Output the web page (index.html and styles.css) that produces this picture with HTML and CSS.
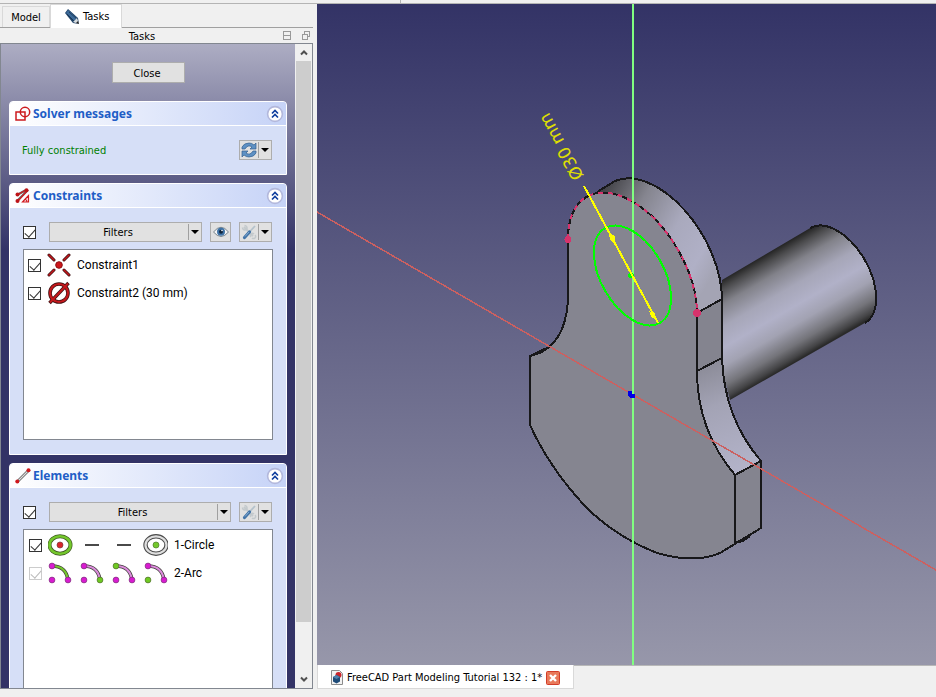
FILE: index.html
```html
<!DOCTYPE html>
<html lang="en">
<head>
<meta charset="utf-8">
<title>FreeCAD</title>
<link rel="stylesheet" href="styles.css">
</head>
<body>
<svg class="defs" width="0" height="0" aria-hidden="true">
  <defs>
    <linearGradient id="arcside" gradientUnits="userSpaceOnUse" x1="600" y1="188" x2="722" y2="260">
      <stop offset="0" stop-color="#3c3c40"/><stop offset=".3" stop-color="#85858f"/><stop offset=".6" stop-color="#a9a9bd"/><stop offset=".85" stop-color="#b0b0c6"/><stop offset="1" stop-color="#a4a4b4"/>
    </linearGradient>
    <linearGradient id="fillet" gradientUnits="userSpaceOnUse" x1="705" y1="362" x2="745" y2="465">
      <stop offset="0" stop-color="#8a8a96"/><stop offset=".4" stop-color="#a3a3b5"/><stop offset="1" stop-color="#b2b2c8"/>
    </linearGradient>
    <linearGradient id="cyl" gradientUnits="userSpaceOnUse" x1="765" y1="255" x2="819" y2="348">
      <stop offset="0" stop-color="#262626"/><stop offset=".07" stop-color="#4a4a4c"/><stop offset=".2" stop-color="#82828a"/><stop offset=".38" stop-color="#a6a6b8"/><stop offset=".55" stop-color="#b1b1c8"/><stop offset=".7" stop-color="#a2a2b2"/><stop offset=".86" stop-color="#74747a"/><stop offset=".96" stop-color="#444446"/><stop offset="1" stop-color="#2a2a2a"/>
    </linearGradient>
    <symbol id="chevrons" viewBox="0 0 18 18">
      <circle cx="9" cy="9" r="7.4" fill="#fff" stroke="#b3b8dc" stroke-width="1.6"/>
      <path d="M6 8.5 9 5.5l3 3M6 12.5l3-3 3 3" fill="none" stroke="#0f3f9f" stroke-width="1.7"/>
    </symbol>
    <symbol id="tools" viewBox="0 0 16 16">
      <path d="m3 3 9 9" stroke="#c3c9cc" stroke-width="2"/>
      <path d="M1.5 3.5a2.5 2.5 0 0 0 4 2M3.5 1.5a2.5 2.5 0 0 1 2 4M10 13a2 2 0 0 1 3-3M11 14a2 2 0 0 0 3-3" fill="none" stroke="#c3c9cc" stroke-width="1.5"/>
      <path d="M14 2 8 8.5" stroke="#b4c2cb" stroke-width="1.8"/>
      <path d="m8.5 8-5 5.5" stroke="#4274a8" stroke-width="3.2" stroke-linecap="round"/>
      <path d="m8 8-4 4.5" stroke="#83abd0"/>
    </symbol>
  </defs>
</svg>

<div class="toolbar-edge"></div>
<div class="workspace">
  <aside class="dock">
    <div class="dock-tabs" role="tablist">
      <button class="dock-tab" role="tab">Model</button>
      <button class="dock-tab active" role="tab" aria-selected="true">
        <svg width="16" height="16" viewBox="0 0 16 16"><path d="M1 4 4 0l10 9 1 6-6-1z" fill="#1f4268"/><path d="m2 4 2-3 9 8-3 3z" fill="#3b6998"/><path d="m3 5 8 8M5 3l8 7" stroke="#173451" stroke-width=".8"/><path d="m9 13 4-4 2 6z" fill="#d8dde0"/><path d="m12 14 2-2 1 3z" fill="#222"/></svg>
        Tasks
      </button>
    </div>
    <header class="dock-title">
      <span class="dock-name">Tasks</span>
      <svg width="8" height="9" viewBox="0 0 8 9" class="crisp"><path d="M.5.5h7v8h-7zM0 4.5h8" fill="none" stroke="#999"/></svg>
      <svg width="8" height="9" viewBox="0 0 8 9" class="crisp"><path d="M.5 3.500h5v5h-5zM2.500 3V.5h5v5H6" fill="none" stroke="#999"/></svg>
    </header>
    <div class="task-area">
      <main class="tasks">
        <button class="close">Close</button>

        <section class="box">
          <h2 class="box-head">
            <svg width="16" height="16" viewBox="0 0 16 16" fill="none" stroke="#cc1a1e" stroke-width="1.500"><path d="M1 6h9v8H1z"/><circle cx="10" cy="6" r="4.700"/></svg>
            <span>Solver messages</span>
            <button class="fold" aria-label="Collapse"><svg width="18" height="18"><use href="#chevrons"/></svg></button>
          </h2>
          <div class="box-body solver">
            <span class="status">Fully constrained</span>
            <button class="tool split" aria-label="Update">
              <svg width="16" height="16" viewBox="0 0 16 16"><path d="M1 7V5q2-4 7-4 3 0 5 2l2-2v6H9l2-2Q7 2 4 7z" fill="#5e91c4" stroke="#34608f" stroke-width=".7"/><path d="M15 9v2q-2 4-7 4-3 0-5-2l-2 2V9h6l-2 2q4 3 7-2z" fill="#5e91c4" stroke="#34608f" stroke-width=".7"/></svg>
              <i class="caret"></i>
            </button>
          </div>
        </section>

        <section class="box">
          <h2 class="box-head">
            <svg width="16" height="16" viewBox="0 0 16 16"><path d="m2 7 9-5M2 13 13 2" stroke="#666" stroke-width="2.200"/><path d="m2 7 9-5M3 13l9-10" stroke="#d21b20" stroke-width="1.200"/><path d="m7.500 14 6-6.500V14zM10 11q2 1 2 3" stroke="#d21b20" stroke-width="1.200" fill="#f4e4e8"/><g fill="#bd1418"><circle cx="2.500" cy="6.500" r="2"/><circle cx="11.500" cy="2.300" r="2"/><circle cx="2.500" cy="13" r="2"/></g></svg>
            <span>Constraints</span>
            <button class="fold" aria-label="Collapse"><svg width="18" height="18"><use href="#chevrons"/></svg></button>
          </h2>
          <div class="box-body">
            <div class="filter-row">
              <input type="checkbox" checked aria-label="Filter constraints">
              <button class="tool split filters"><span>Filters</span><i class="caret"></i></button>
              <button class="tool eye" aria-label="Show or hide">
                <svg width="16" height="12" viewBox="0 0 16 12"><path d="M.5 6Q8-3.500 15.500 6 8 15 .5 6z" fill="#f4f4f4" stroke="#77828a"/><circle cx="8" cy="5.800" r="4" fill="#3e72a6"/><circle cx="8" cy="5.800" r="2" fill="#10253c"/><circle cx="9" cy="4.500" r=".8" fill="#fff"/></svg>
              </button>
              <button class="tool split" aria-label="Settings"><svg width="16" height="16"><use href="#tools"/></svg><i class="caret"></i></button>
            </div>
            <ul class="list">
              <li><label class="item">
                <input type="checkbox" checked>
                <svg width="24" height="24" viewBox="0 0 24 24"><g stroke-linecap="round"><path d="m2 2 5 5M22 2l-5 5M2 22l5-5M22 22l-5-5" stroke="#3c1012" stroke-width="3"/><path d="m2 2 5 5M22 2l-5 5M2 22l5-5M22 22l-5-5" stroke="#c4181c" stroke-width="1.500"/></g><circle cx="12" cy="12" r="3.300" fill="#cf171c" stroke="#8a1013"/></svg>
                <span>Constraint1</span>
              </label></li>
              <li><label class="item">
                <input type="checkbox" checked>
                <svg width="24" height="24" viewBox="0 0 24 24" fill="none"><circle cx="12" cy="12" r="9" stroke="#3c1012" stroke-width="3.600"/><path d="M2.500 22 21.500 2" stroke="#3c1012" stroke-width="3.400"/><circle cx="12" cy="12" r="9" stroke="#c4181c" stroke-width="2.200"/><path d="M3 21.500 21 2.500" stroke="#c4181c" stroke-width="2"/></svg>
                <span>Constraint2 (30 mm)</span>
              </label></li>
            </ul>
          </div>
        </section>

        <section class="box">
          <h2 class="box-head">
            <svg width="16" height="16" viewBox="0 0 16 16"><path d="M2.500 13.500 13.500 2.500" stroke="#555" stroke-width="2.600"/><path d="M2.500 13.500 13.500 2.500" stroke="#ddd" stroke-width="1.200"/><circle cx="2.300" cy="13.500" r="2" fill="#cf171c"/><circle cx="13.500" cy="2.300" r="2" fill="#cf171c"/></svg>
            <span>Elements</span>
            <button class="fold" aria-label="Collapse"><svg width="18" height="18"><use href="#chevrons"/></svg></button>
          </h2>
          <div class="box-body">
            <div class="filter-row">
              <input type="checkbox" checked aria-label="Filter elements">
              <button class="tool split filters"><span>Filters</span><i class="caret"></i></button>
              <button class="tool split" aria-label="Settings"><svg width="16" height="16"><use href="#tools"/></svg><i class="caret"></i></button>
            </div>
            <ul class="list elements">
              <li><label class="item">
                <input type="checkbox" checked>
                <svg width="120" height="24" viewBox="0 0 120 24">
                  <g fill="none"><ellipse cx="12" cy="12" rx="10.500" ry="8.700" stroke="#3f5a22" stroke-width="4"/><ellipse cx="12" cy="12" rx="10.500" ry="8.700" stroke="#74c82c" stroke-width="2.600"/>
                  <ellipse cx="108" cy="12" rx="10.500" ry="8.700" stroke="#4c4c4c" stroke-width="4.400"/><ellipse cx="108" cy="12" rx="10.500" ry="8.700" stroke="#dedede" stroke-width="2.200"/>
                  <path d="M37 12h14M69 12h14" stroke="#4a4a4a" stroke-width="2"/></g>
                  <circle cx="12" cy="12" r="3" fill="#d9252a" stroke="#7b3a3a" stroke-width=".7"/><circle cx="108" cy="12" r="3" fill="#74c82c" stroke="#4c7a2a" stroke-width=".7"/>
                </svg>
                <span>1-Circle</span>
              </label></li>
              <li><label class="item">
                <input type="checkbox" checked disabled>
                <svg width="120" height="24" viewBox="0 0 120 24">
                  <g fill="none" stroke="#45403f" stroke-width="3.600"><path d="M4 5q14 0 16 14M36 5q14 0 16 14M68 5q14 0 16 14M100 5q14 0 16 14"/></g>
                  <path d="M4 5q14 0 16 14" fill="none" stroke="#74c82c" stroke-width="2.200"/>
                  <path d="M36 5q14 0 16 14M68 5q14 0 16 14M100 5q14 0 16 14" fill="none" stroke="#dc8cdc" stroke-width="2"/>
                  <g fill="#d81cd0" stroke="#7a2e77" stroke-width=".7"><circle cx="4" cy="5" r="2.900"/><circle cx="4" cy="19" r="2.900"/><circle cx="20" cy="19" r="2.900"/><circle cx="36" cy="5" r="2.900"/><circle cx="36" cy="19" r="2.900"/><circle cx="68" cy="19" r="2.900"/><circle cx="84" cy="19" r="2.900"/><circle cx="100" cy="5" r="2.900"/><circle cx="116" cy="19" r="2.900"/></g>
                  <g fill="#6fca22" stroke="#4c6a2a" stroke-width=".7"><circle cx="52" cy="19" r="2.900"/><circle cx="68" cy="5" r="2.900"/><circle cx="100" cy="19" r="2.900"/></g>
                </svg>
                <span>2-Arc</span>
              </label></li>
            </ul>
          </div>
        </section>
      </main>
      <div class="scrollbar">
        <button class="scroll-step" aria-label="Scroll up"><svg width="8" height="7" viewBox="0 0 8 7"><path d="m1 5.500 3-3 3 3" fill="none" stroke="#505050" stroke-width="2"/></svg></button>
        <div class="scroll-track"><div class="scroll-thumb"></div></div>
        <button class="scroll-step" aria-label="Scroll down"><svg width="8" height="7" viewBox="0 0 8 7"><path d="m1 1.500 3 3 3-3" fill="none" stroke="#505050" stroke-width="2"/></svg></button>
      </div>
    </div>
  </aside>

  <div class="editor">
    <svg class="view" viewBox="317 4 619 661" preserveAspectRatio="xMidYMid slice" role="img" aria-label="3D view">
      <path d="M722 280 810.200 228A54.700 31.400 60 0 1 864.800 323L730 400 720 360z" fill="url(#cyl)"/>
      <g class="crisp">
        <path d="M590 196 615 181A91.500 52.500 60 0 1 722 299L697 313A91.500 52.500 60 0 0 590 196z" fill="url(#arcside)"/>
        <path d="M697 313 722 299V358L697 371z" fill="#84848f"/>
        <path d="M697 371 722 358Q724 418 761 461L735 475Q697 430 697 371z" fill="url(#fillet)"/>
        <path d="M735 475 761 461V528L735 543z" fill="#84848f"/>
        <path d="M568 239A91.500 52.500 60 0 1 697 313V371Q697 430 735 475V543L720 553Q695 564 657 553 614 536 584 505 549 467 530 425V356L549 347Q567 332 568 297z" fill="#858590"/>
        <g fill="none" stroke="#18181a" stroke-width="2">
          <path d="M568 239V297Q567 332 549 347L530 356V425Q549 467 584 505 614 536 657 553 695 564 720 553L761 528V461Q724 418 722 358V299A91.500 52.500 60 0 0 615 181L597 192"/>
          <path d="M697 313V371Q697 430 735 475V543M697 313 722 299M697 371 722 358M735 475 761 461"/>
          <path d="M810.200 228A54.700 31.400 60 0 1 864.800 323"/>
          <path d="M568 239A91.500 52.500 60 0 1 697 313"/>
          <path d="m530 356 19-9-9 6zM735 543l15-7-7 5z" fill="#18181a"/>
        </g>
        <path d="M568 239A91.500 52.500 60 0 1 697 313" fill="none" stroke="#d6336c" stroke-width="2" stroke-dasharray="5 5"/>
        <path d="M633 0V670" stroke="#80ff80" stroke-width="2"/>
        <path d="M317 212 936 570" stroke="#cc6060" stroke-width="1.500"/>
        <ellipse cx="632.500" cy="275.500" rx="54.700" ry="31.400" transform="rotate(60 632.500 275.500)" fill="none" stroke="#00ff00" stroke-width="2"/>
        <circle cx="631" cy="275.500" r="3" fill="#00ff00"/>
        <path d="m584 186 74 137" stroke="#ffff00" stroke-width="2"/>
        <path d="m609 233 2 7 4 3-1-7zM650 312l2 5 4 2-2-6z" fill="#ffff00" stroke="#ffff00"/>
        <circle cx="568" cy="239.500" r="3.500" fill="#d6336c"/>
        <circle cx="697" cy="313" r="4" fill="#d6336c"/>
        <path d="M628 391h4v3h3v4h-5l-2-3z" fill="#0000e6"/>
      </g>
      <text class="dimension" transform="translate(584 176) rotate(-119)">Ø30 mm</text>
    </svg>
    <div class="file-tabs">
      <div class="file-tab">
        <svg width="12" height="15" viewBox="0 0 12 15"><path d="M.5.5h8l3 3v11H.5z" fill="#f2f2f2" stroke="#8c8c8c"/><circle cx="7.500" cy="5" r="3" fill="#c9242a"/><path d="m2 7 3.500-2L9 7v4.500L5.500 13.500 2 11.500z" fill="#1e4b78"/><path d="m2 7 3.500-2L9 7 5.500 9z" fill="#4d80ae"/></svg>
        <span>FreeCAD Part Modeling Tutorial 132 : 1*</span>
        <button class="file-close" aria-label="Close tab"><svg width="14" height="14" viewBox="0 0 14 14"><rect x=".5" y=".5" width="13" height="13" rx="1" fill="#e8795a" stroke="#d23c28"/><path d="m4 4 6 6m0-6-6 6" stroke="#fff" stroke-width="2.400"/></svg></button>
      </div>
    </div>
  </div>
</div>
</body>
</html>
```
FILE: styles.css
```css
* { box-sizing: border-box; }

body {
  margin: 0;
  height: 100vh;
  display: flex;
  flex-direction: column;
  overflow: hidden;
  background: #f0f0f0;
  color: #000;
  font: 11px/16px "DejaVu Sans Condensed", "Noto Sans", sans-serif;
}

button {
  margin: 0;
  padding: 0;
  border: 0;
  background: none;
  color: inherit;
  font: inherit;
}

svg { display: block; flex: none; }
.defs { position: absolute; }
.crisp { shape-rendering: crispEdges; }

.toolbar-edge { flex: none; height: 4px; border-bottom: 1px solid #b4b4b4; }
.toolbar-edge::before {
  content: "";
  display: block;
  width: 400px;
  height: 3px;
  border-right: 1px solid #b4b4b4;
}

.workspace { flex: 1; min-height: 0; display: flex; gap: 4px; padding-bottom: 8px; }

.dock { width: 313px; flex: none; display: flex; flex-direction: column; }
.dock-tabs {
  display: flex;
  align-items: flex-end;
  height: 24px;
  padding-left: 2px;
  border-bottom: 1px solid #a0a0a0;
}
.dock-tab {
  min-width: 48px;
  height: 21px;
  padding: 2px 8px 0;
  border: 1px solid #d9d9d9;
  border-bottom: 0;
}
.dock-tab.active {
  display: flex;
  align-items: center;
  gap: 3px;
  height: 24px;
  margin-bottom: -1px;
  padding: 0 12px 0 13px;
  background: #fff;
}
.dock-title {
  display: flex;
  align-items: center;
  gap: 11px;
  height: 15px;
  padding-right: 3px;
}
.dock-name { flex: 1; padding: 2px 0 0 12px; text-align: center; }

.task-area {
  flex: 1;
  min-height: 0;
  display: flex;
  border: 1px solid #828790;
}
.tasks {
  flex: 1;
  min-width: 0;
  display: flex;
  flex-direction: column;
  gap: 8px;
  padding: 18px 8px 0;
  overflow: hidden;
  background: linear-gradient(#adadc3, #333366 206px);
}
.close {
  flex: none;
  align-self: center;
  width: 73px;
  height: 21px;
  margin-bottom: 10px;
  padding: 2px 2px 0 0;
  border: 1px solid #adadad;
  background: #e1e1e1;
}

.box {
  flex: none;
  border: 1px solid #fff;
  border-radius: 4px 4px 0 0;
  background: #d6dff7;
}
.box-head {
  display: flex;
  align-items: center;
  gap: 2px;
  height: 24px;
  margin: 0;
  padding: 0 2px 0 5px;
  border-bottom: 1px solid #fff;
  border-radius: 3px 3px 0 0;
  background: linear-gradient(90deg, #fff, #c6d3f7);
  color: #215dc6;
  font-family: "Noto Sans", sans-serif;
  font-size: 12px;
}
.fold { margin-left: auto; }
.box-body { padding: 14px; padding-left: 13px; }
.solver { display: flex; align-items: center; justify-content: space-between; padding-left: 12px; }
.status { padding-top: 2px; color: #008000; }

.tool {
  flex: none;
  display: flex;
  align-items: center;
  justify-content: center;
  height: 20px;
  border: 1px solid #adadad;
  background: #e1e1e1;
}
.split { width: 33px; justify-content: space-between; padding-left: 1px; }
.filters { flex: 1; margin-left: 5px; padding-left: 0; }
.filters span { flex: 1; padding: 2px 2px 0 0; text-align: center; }
.eye { width: 21px; }
.caret {
  display: flex;
  align-items: center;
  justify-content: center;
  width: 13px;
  height: 16px;
  border-left: 1px solid #a0a0a0;
}
.caret::before {
  content: "";
  border: 4px solid transparent;
  border-top-color: #000;
  border-bottom: 0;
}

.filter-row { display: flex; align-items: center; gap: 8px; margin-bottom: 7px; }

input[type="checkbox"] {
  appearance: none;
  flex: none;
  display: flex;
  justify-content: center;
  width: 13px;
  height: 13px;
  margin: 0;
  border: 1px solid #333;
  background: #fff;
}
input[type="checkbox"]:checked::before {
  content: "";
  width: 5px;
  height: 9px;
  border: solid #333;
  border-width: 0 1px 1px 0;
  transform: rotate(42deg);
}
input[type="checkbox"]:disabled { border-color: #ccc; }
input[type="checkbox"]:disabled::before { border-color: #bbb; }

.list {
  height: 191px;
  margin: 0 -1px 0 0;
  padding: 1px 4px;
  border: 1px solid #828790;
  background: #fff;
  list-style: none;
  font-family: Roboto, "Noto Sans", sans-serif;
  font-size: 12px;
}
.elements { padding-left: 5px; }
.item { display: flex; align-items: center; gap: 6px; height: 28px; }

.scrollbar { flex: none; display: flex; flex-direction: column; width: 17px; padding: 0 1px; background: #f0f0f0; }
.scroll-step { flex: none; display: flex; align-items: center; justify-content: center; height: 17px; }
.scroll-track { flex: 1; }
.scroll-thumb { height: 92%; background: #cdcdcd; }

.editor { flex: 1; min-width: 0; display: flex; flex-direction: column; }
.view {
  flex: 1;
  width: 100%;
  min-height: 0;
  background: linear-gradient(#333366, #9797aa);
}
.dimension { fill: #e0e000; font: 17px "DejaVu Sans", sans-serif; }

.file-tabs { flex: none; display: flex; height: 24px; border-top: 1px solid #b8b8b8; }
.file-tab {
  display: flex;
  align-items: center;
  gap: 4px;
  height: 24px;
  margin-top: -1px;
  padding: 2px 13px 0;
  border: 1px solid #d9d9d9;
  border-top: 0;
  background: #fff;
}
```
